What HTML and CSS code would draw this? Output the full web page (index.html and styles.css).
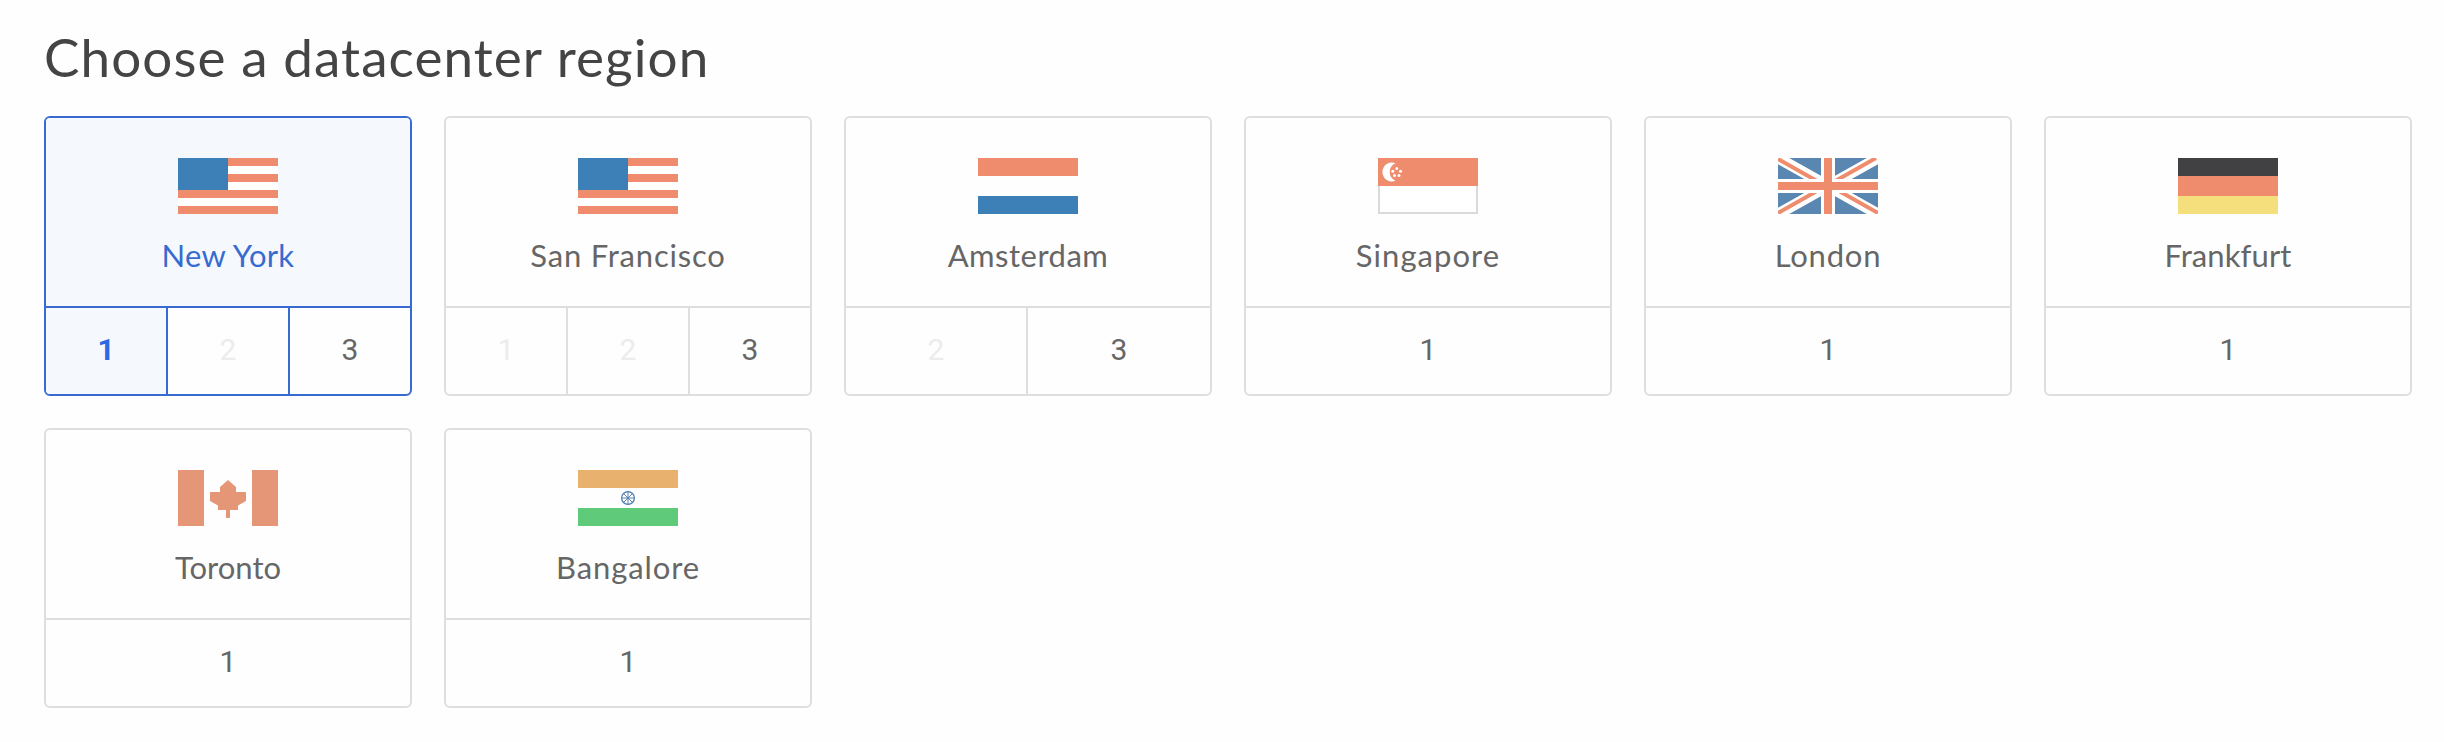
FILE: index.html
```html
<!DOCTYPE html>
<html lang="en">
<head>
<meta charset="utf-8">
<title>Choose a datacenter region</title>
<link rel="stylesheet" href="styles.css">
</head>
<body>
<main class="page">
  <h1 class="title">Choose a datacenter region</h1>
  <div class="regions">
    <section class="card card--active">
      <div class="card-main">
        <svg class="flag" viewBox="0 0 100 56" shape-rendering="crispEdges"><path fill="#fff" d="M0 0h100v56H0z"/><path fill="#ef8c6d" d="M50 0h50v8H50zM50 16h50v8H50zM0 32h100v8H0zM0 48h100v8H0z"/><path fill="#3d7fb7" d="M0 0h50v32H0z"/></svg>
        <div class="name new-york">New York</div>
      </div>
      <div class="slots slots--3"><div class="slot slot--selected">1</div><div class="slot slot--off">2</div><div class="slot">3</div></div>
    </section>
    <section class="card">
      <div class="card-main">
        <svg class="flag" viewBox="0 0 100 56" shape-rendering="crispEdges"><path fill="#fff" d="M0 0h100v56H0z"/><path fill="#ef8c6d" d="M50 0h50v8H50zM50 16h50v8H50zM0 32h100v8H0zM0 48h100v8H0z"/><path fill="#3d7fb7" d="M0 0h50v32H0z"/></svg>
        <div class="name san-francisco">San Francisco</div>
      </div>
      <div class="slots slots--3"><div class="slot slot--off">1</div><div class="slot slot--off">2</div><div class="slot">3</div></div>
    </section>
    <section class="card">
      <div class="card-main">
        <svg class="flag" viewBox="0 0 100 56" shape-rendering="crispEdges"><path fill="#ef8c6d" d="M0 0h100v18H0z"/><path fill="#3d7fb7" d="M0 38h100v18H0z"/></svg>
        <div class="name amsterdam">Amsterdam</div>
      </div>
      <div class="slots slots--2"><div class="slot slot--off">2</div><div class="slot">3</div></div>
    </section>
    <section class="card">
      <div class="card-main">
        <svg class="flag" viewBox="0 0 100 56"><path fill="#fff" stroke="#dadada" stroke-width="2" d="M1 1h98v54H1z"/><path fill="#ef8c6d" d="M0 0h100v28H0z"/><path fill="#fff" d="M17.500 5.200A9.500 9.500 0 1 0 17.500 22.800A9.600 9.600 0 0 1 17.500 5.200z"/><g fill="#fff"><circle cx="18.800" cy="10.500" r="1.500"/><circle cx="14.800" cy="13.300" r="1.500"/><circle cx="22.500" cy="13.300" r="1.500"/><circle cx="16.500" cy="17.400" r="1.500"/><circle cx="21" cy="17.400" r="1.500"/></g></svg>
        <div class="name singapore">Singapore</div>
      </div>
      <div class="slots"><div class="slot">1</div></div>
    </section>
    <section class="card">
      <div class="card-main">
        <svg class="flag" viewBox="0 0 100 56"><path fill="#5a87b1" d="M0 0h100v56H0z"/><path stroke="#fff" stroke-width="11" d="M0 0L100 56M100 0L0 56"/><path stroke="#ef8c6d" stroke-width="4" d="M0 1L46 27M98 0L52 26M0 55L46 29M100 55L54 29"/><path fill="#fff" d="M43 0h14v56H43zM0 21h100v14H0z"/><path fill="#ef8c6d" d="M46 0h8v56h-8zM0 24h100v8H0z"/></svg>
        <div class="name london">London</div>
      </div>
      <div class="slots"><div class="slot">1</div></div>
    </section>
    <section class="card">
      <div class="card-main">
        <svg class="flag" viewBox="0 0 100 56" shape-rendering="crispEdges"><path fill="#414042" d="M0 0h100v18H0z"/><path fill="#ef8c6d" d="M0 18h100v20H0z"/><path fill="#f5de7c" d="M0 38h100v18H0z"/></svg>
        <div class="name frankfurt">Frankfurt</div>
      </div>
      <div class="slots"><div class="slot">1</div></div>
    </section>
    <section class="card">
      <div class="card-main">
        <svg class="flag" viewBox="0 0 100 56"><path fill="#e59677" d="M0 0h26v56H0zM74 0h26v56H74zM50 10L58 17V22H68V31L60 35.500V40H52V48H48V40H40V35.500L32 31V22H42V17z"/></svg>
        <div class="name toronto">Toronto</div>
      </div>
      <div class="slots"><div class="slot">1</div></div>
    </section>
    <section class="card">
      <div class="card-main">
        <svg class="flag" viewBox="0 0 100 56"><path fill="#e8b26e" d="M0 0h100v18H0z"/><path fill="#60ca7b" d="M0 38h100v18H0z"/><g fill="none" stroke="#4a77b0"><circle cx="50" cy="28" r="6.400" stroke-width="1.200"/><path stroke-width=".9" d="M50 22v12M44 28h12M45.700 23.700l8.600 8.600M54.300 23.700l-8.600 8.600"/></g></svg>
        <div class="name bangalore">Bangalore</div>
      </div>
      <div class="slots"><div class="slot">1</div></div>
    </section>
  </div>
</main>
</body>
</html>
```
FILE: styles.css
```css
* { box-sizing: border-box; }
body { margin: 0; background: #fefefe; font-family: Lato, "Open Sans", sans-serif; color: #666; }
.page { padding: 22px 32px 0 44px; }
.title { margin: 0; height: 94px; font-size: 53px; line-height: 70px; font-weight: 400; color: #444; white-space: nowrap; letter-spacing: 1.08px; }
.regions { display: grid; grid-template-columns: repeat(6, 368px); grid-auto-rows: 280px; gap: 32px; }
.card { --line: #dedede; border: 2px solid var(--line); border-radius: 6px; overflow: hidden; display: flex; flex-direction: column; }
.card--active { --line: #376bd0; }
.card-main { height: 188px; padding-top: 40px; display: flex; flex-direction: column; align-items: center; }
.card--active .card-main { background: #f5f9fe; color: #376bd0; }
.flag { display: block; width: 100px; height: 56px; flex: none; }
.name { margin-top: 21px; font-size: 31px; line-height: 40px; white-space: nowrap; }
.new-york { letter-spacing: .3px; }
.san-francisco { letter-spacing: .8px; }
.amsterdam { letter-spacing: .5px; }
.singapore { letter-spacing: 1.05px; }
.london { letter-spacing: .8px; }
.frankfurt { letter-spacing: .1px; }
.bangalore { letter-spacing: .9px; }
.slots { height: 88px; border-top: 2px solid var(--line); display: grid; grid-template-columns: 1fr; }
.slots--2 { grid-template-columns: 182px 182px; }
.slots--3 { grid-template-columns: 122px 122px 120px; }
.slot { font: 400 30px/83px Roboto, sans-serif; text-align: center; border-right: 2px solid var(--line); }
.slot:last-child { border-right: 0; }
.slot--off { color: #ececec; }
.slot--selected { background: #f5f9fe; color: #2d69e3; font-weight: 700; }
```
